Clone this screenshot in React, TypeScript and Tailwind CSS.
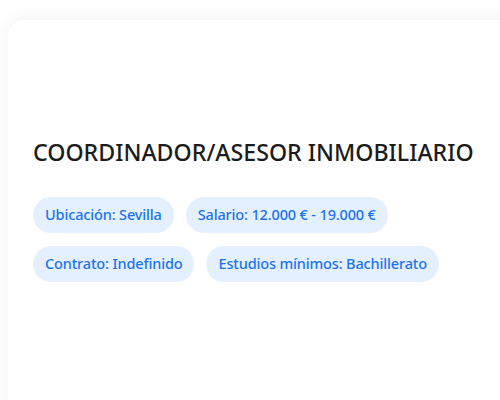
import * as React from 'react';

type Tag = { label: string };

const tags: Tag[][] = [
  [{ label: 'Ubicación: Sevilla' }, { label: 'Salario: 12.000 € - 19.000 €' }],
  [{ label: 'Contrato: Indefinido' }, { label: 'Estudios mínimos: Bachillerato' }],
];

function Chip({ label }: Tag) {
  return (
    <span className="inline-flex items-center h-9 px-3 rounded-full bg-[#e5f0ff] text-[#1a73f0] text-[14.5px] tracking-[-0.15px] font-medium">
      {label}
    </span>
  );
}

export default function App() {
  return (
    <div
      className="w-[500px] h-[400px] overflow-hidden bg-white pl-2 pt-5"
      style={{ fontFamily: '"Noto Sans", "Open Sans", sans-serif' }}
    >
      <div className="w-[540px] h-[420px] rounded-2xl bg-white shadow-[0_0_20px_rgba(0,0,0,0.06)] px-[25px] pt-[116px]">
        <h1 className="text-[23.2px] leading-8 font-medium text-[#1c1c1c]">
          COORDINADOR/ASESOR INMOBILIARIO
        </h1>
        <div className="mt-[29px] flex flex-col gap-[13px]">
          {tags.map((row, i) => (
            <div key={i} className="flex gap-3">
              {row.map((t) => (
                <Chip key={t.label} label={t.label} />
              ))}
            </div>
          ))}
        </div>
      </div>
    </div>
  );
}
